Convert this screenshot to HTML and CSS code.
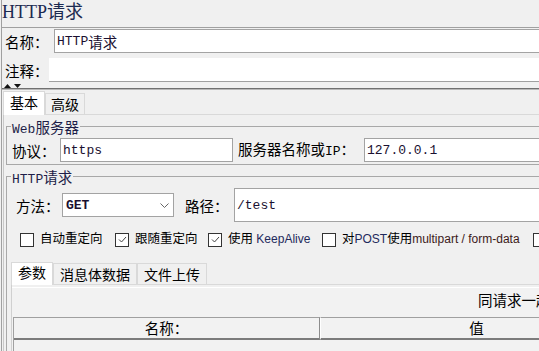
FILE: index.html
```html
<!DOCTYPE html>
<html lang="zh-CN">
<head>
<meta charset="utf-8">
<title>HTTP请求</title>
<link rel="stylesheet" href="styles.css">
</head>
<body>
<div class="app">
  <div class="title">HTTP请求</div>
  <div class="main">
    <div class="row name-row">
      <span class="lbl w49">名称：</span>
      <div class="field"><span>HTTP</span><span class="c">请求</span></div>
    </div>
    <div class="row comment-row">
      <span class="lbl w44">注释：</span>
      <div class="area"></div>
    </div>
    <div class="splitter">
      <svg class="arrows" width="22" height="5" viewBox="0 0 22 5"><polygon points="2,5 5.5,1 9,5" fill="#111"/><polygon points="12,1 19,1 15.5,5" fill="#111"/></svg>
    </div>
    <div class="tabs">
      <div class="tab on">基本</div>
      <div class="tab off narrow">高级</div>
    </div>
    <div class="panel">
      <fieldset class="fs">
        <legend><span class="m">Web</span>服务器</legend>
        <div class="row web-row">
          <span class="lbl w48">协议：</span>
          <div class="field w173"><span>https</span></div>
          <span class="lbl w126 ml5">服务器名称或<span class="m">IP</span>：</span>
          <div class="field"><span>127.0.0.1</span></div>
        </div>
      </fieldset>
      <fieldset class="fs">
        <legend><span class="m">HTTP</span>请求</legend>
        <div class="row req-row">
          <span class="lbl w46">方法：</span>
          <div class="select"><span class="sel-val">GET</span><svg width="9" height="5" viewBox="0 0 9 5"><polyline points="0.5,0.5 4.5,4.5 8.5,0.5" fill="none" stroke="#666" stroke-width="1"/></svg></div>
          <span class="lbl w49 ml11">路径：</span>
          <div class="field tall"><span>/test</span></div>
        </div>
        <div class="checks">
          <label class="chk"><span class="box"></span><span class="cj">自动重定向</span></label>
          <label class="chk"><span class="box"><svg width="11" height="11" viewBox="0 0 11 11"><polyline points="2,5.5 4.5,8 9,3" fill="none" stroke="#444" stroke-width="1"/></svg></span><span class="cj">跟随重定向</span></label>
          <label class="chk"><span class="box"><svg width="11" height="11" viewBox="0 0 11 11"><polyline points="2,5.5 4.5,8 9,3" fill="none" stroke="#444" stroke-width="1"/></svg></span><span><span class="cj">使用</span> <span class="ka">KeepAlive</span></span></label>
          <label class="chk"><span class="box"></span><span><span class="cj">对</span><span class="ka">POST</span><span class="cj">使用</span><span class="mp">multipart / form-data</span></span></label>
          <label class="chk"><span class="box"></span></label>
        </div>
        <div class="tabs itabs">
          <div class="tab on">参数</div>
          <div class="tab off">消息体数据</div>
          <div class="tab off">文件上传</div>
        </div>
        <div class="ipanel">
          <div class="ibody">
            <div class="send">同请求一起发送参数：</div>
            <div class="grid">
              <div class="th th1">名称：</div>
              <div class="th th2">值</div>
            </div>
          </div>
        </div>
      </fieldset>
    </div>
  </div>
</div>
</body>
</html>
```

FILE: styles.css
```css
html, body {
  margin: 0;
  padding: 0;
  overflow: hidden;
  background: #f0f0f0;
}
body {
  width: 539px;
  height: 351px;
  font-family: "Noto Sans CJK SC", sans-serif;
  font-size: 14.5px;
  color: #000;
}
.app {
  width: 640px;
  height: 351px;
  margin-left: 1px;
  border-left: 1px solid #a0a0a0;
}
.title {
  height: 27px;
  font: 18px/24px "Liberation Serif", "Noto Sans CJK SC", serif;
  color: #1b2a50;
  white-space: nowrap;
}
.main {
  border-top: 1px solid #a0a0a0;
}
.row {
  display: flex;
  align-items: center;
}
.lbl {
  flex: none;
  line-height: 17px;
  white-space: nowrap;
}
.m {
  font-family: "Liberation Mono", monospace;
  font-size: 13px;
}
.c {
  font-family: "Noto Sans CJK SC", sans-serif;
  font-size: 14.5px;
}
.w44 { width: 44px; }
.w46 { width: 46px; }
.w48 { width: 48px; }
.w49 { width: 49px; }
.w126 { width: 126px; }
.ml5 { margin-left: 5px; }
.ml11 { margin-left: 11px; }

.field {
  flex: 1;
  height: 24px;
  box-sizing: border-box;
  border: 1px solid #a3a3a3;
  background: #fff;
  display: flex;
  align-items: center;
  padding-left: 2px;
  font: 13px "Liberation Mono", "Noto Sans CJK SC", monospace;
  color: #1a1030;
  white-space: nowrap;
}
.field.w173 { flex: none; width: 173px; }
.field.tall { height: 34px; }

.name-row {
  margin-top: 1px;
  padding-left: 3px;
}
.comment-row {
  margin-top: 5px;
  padding-left: 3px;
}
.area {
  flex: 1;
  height: 24px;
  box-sizing: border-box;
  background: #fff;
  border-bottom: 1px solid #a0a0a0;
}
.splitter {
  height: 6px;
  display: flex;
  align-items: flex-end;
  border-bottom: 1px solid #707070;
  box-shadow: 0 1px 0 #b8b8b8;
}
.arrows { display: block; }

.tabs {
  display: flex;
  align-items: flex-end;
  height: 24px;
  margin-top: 1px;
  margin-left: 1px;
}
.tab {
  box-sizing: border-box;
  border: 1px solid #d9d9d9;
  border-bottom: none;
  padding: 0 6px;
  font-size: 14px;
  line-height: 17px;
  display: flex;
  align-items: center;
  background: #f0f0f0;
  white-space: nowrap;
}
.tab.on {
  background: #fff;
  height: 24px;
  padding-bottom: 3px;
  margin-bottom: -1px;
  position: relative;
  z-index: 1;
}
.tab.off { height: 21px; }
.tab.narrow { padding: 0 5px; }

.panel {
  margin-left: 1px;
  border-top: 1px solid #d9d9d9;
  border-left: 1px solid #c8c8c8;
  height: 240px;
}
.fs {
  margin: 3px 2px 0;
  padding: 0 4px 2px;
  border: 1px solid #a8a8a8;
  min-width: 0;
}
.fs legend {
  padding: 0 1px;
  margin: 0;
  height: 17px;
  line-height: 17px;
  font-size: 14.5px;
  color: #1e1e48;
  white-space: nowrap;
}
.web-row {
  margin-top: 3px;
  padding-left: 1px;
}
.req-row {
  margin-top: 3px;
  padding-left: 5px;
}
.select {
  flex: none;
  width: 112px;
  height: 24px;
  box-sizing: border-box;
  border: 1px solid #a3a3a3;
  background: #fff;
  display: flex;
  align-items: center;
  justify-content: space-between;
  padding: 0 4px 0 3px;
}
.sel-val {
  font: bold 13px "Liberation Mono", monospace;
  color: #1a1030;
}
.select svg { display: block; }

.checks {
  display: grid;
  grid-template-columns: 95px 93px 114px 211px auto;
  height: 17px;
  margin-top: 9px;
  padding-left: 9px;
  align-items: center;
}
.chk {
  display: flex;
  align-items: center;
  gap: 6px;
  font: 12px/17px "Liberation Sans", "Noto Sans CJK SC", sans-serif;
  white-space: nowrap;
}
.chk .cj { font-size: 12.5px; }
.box {
  flex: none;
  width: 14px;
  height: 14px;
  box-sizing: border-box;
  border: 1px solid #333;
  background: #fff;
  display: flex;
  align-items: center;
  justify-content: center;
}
.box svg { display: block; }
.ka { color: #1f2a5c; }
.mp { color: #3c1a1a; }

.itabs {
  height: 22px;
  margin-top: 14px;
  margin-left: 0;
}
.itabs .tab.on {
  height: 23px;
  padding-bottom: 4px;
}
.ipanel {
  border-top: 1px solid #d9d9d9;
  border-left: 1px solid #d0d0d0;
}
.ibody {
  margin-top: 2px;
  border-top: 1px solid #fff;
  background: #f2f2f2;
  height: 80px;
}
.send {
  height: 24px;
  line-height: 24px;
  text-align: right;
  padding-right: 12px;
  white-space: nowrap;
}
.grid {
  margin: 5px 3px 0 1px;
  border-left: 1px solid #a0a0a0;
  display: grid;
  grid-template-columns: 306px 1fr;
  height: 60px;
  align-content: start;
}
.th {
  height: 23px;
  box-sizing: border-box;
  border-top: 1px solid #a0a0a0;
  border-bottom: 2px solid #7c7c7c;
  background: #f2f2f2;
  line-height: 20px;
  text-align: center;
  white-space: nowrap;
}
.th1 { border-right: 1px solid #8c8c8c; }
.th2 { border-left: 1px solid #fff; }
```
